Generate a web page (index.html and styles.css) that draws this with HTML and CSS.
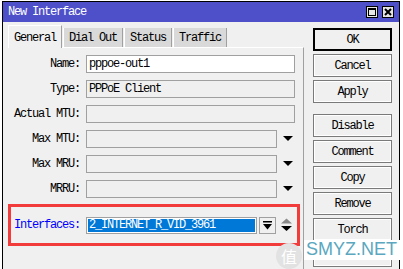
FILE: index.html
```html
<!DOCTYPE html>
<html lang="en">
<head>
    <meta charset="UTF-8">
    <title>New Interface</title>
    <link rel="stylesheet" href="styles.css">
</head>
<body>

    <div class="window">
        <div class="titlebar">
            <span class="title">New Interface</span>
            <div class="title-buttons">
                <span class="tbtn">
                    <svg width="10" height="10" viewBox="0 0 10 10"><rect x="1.5" y="1.5" width="7" height="7" fill="none" stroke="#000"/><rect x="1" y="1" width="8" height="2" fill="#000"/></svg>
                </span>
                <span class="tbtn">
                    <svg width="10" height="10" viewBox="0 0 10 10"><path d="M2 2 L8 8 M8 2 L2 8" stroke="#000" stroke-width="2"/></svg>
                </span>
            </div>
        </div>

        <div class="content">
            <!-- Pestañas y formulario -->
            <div class="main">
                <div class="tabs">
                    <div class="tab active">General</div>
                    <div class="tab">Dial Out</div>
                    <div class="tab">Status</div>
                    <div class="tab">Traffic</div>
                </div>

                <div class="panel">
                    <div class="row">
                        <label>Name:</label>
                        <div class="field editable">pppoe-out1</div>
                    </div>
                    <div class="row">
                        <label>Type:</label>
                        <div class="field">PPPoE Client</div>
                    </div>
                    <div class="row">
                        <label>Actual MTU:</label>
                        <div class="field"></div>
                    </div>
                    <div class="row">
                        <label>Max MTU:</label>
                        <div class="field short"></div>
                        <span class="drop"></span>
                    </div>
                    <div class="row">
                        <label>Max MRU:</label>
                        <div class="field short"></div>
                        <span class="drop"></span>
                    </div>
                    <div class="row">
                        <label>MRRU:</label>
                        <div class="field short"></div>
                        <span class="drop"></span>
                    </div>

                    <div class="highlight">
                        <label>Interfaces:</label>
                        <div class="select"><span>2_INTERNET_R_VID_3961</span></div>
                        <span class="select-btn">
                            <svg width="9" height="9" viewBox="0 0 9 9"><rect x="0" y="0" width="9" height="1.5" fill="#000"/><path d="M0 3 H9 L4.5 8.5 Z" fill="#000"/></svg>
                        </span>
                        <span class="updown">
                            <svg width="11" height="14" viewBox="0 0 11 14"><path d="M0 5.5 L5.5 0.5 L11 5.5 Z" fill="#8a8a8a"/><path d="M0 8 H11 L5.5 13 Z" fill="#000"/></svg>
                        </span>
                    </div>
                </div>
            </div>

            <!-- Botones -->
            <div class="actions">
                <button class="default">OK</button>
                <button>Cancel</button>
                <button>Apply</button>
                <button class="spaced">Disable</button>
                <button>Comment</button>
                <button>Copy</button>
                <button>Remove</button>
                <button>Torch</button>
                <button aria-label="PPPoE Scan"></button>
            </div>
        </div>
    </div>

    <div class="watermark">
        <span class="logo">值</span>
        <span class="mark">SMYZ.NET</span>
    </div>

</body>
</html>
```

FILE: styles.css
```css
/* Colores */
:root {
    --fondo: #f0f0f0;
    --titulo: #4d50c9;
    --borde: #a0a0a0;
    --rojo: #f23b3b;
    --seleccion: #0078d7;
}

* {
    box-sizing: border-box;
}

body {
    margin: 0;
    width: 403px;
    height: 269px;
    overflow: hidden;
    position: relative;
    background-color: #fff;
    font-family: "Liberation Mono", monospace;
    font-size: 12px;
    letter-spacing: -1.2px;
    color: #000;
}

/* Ventana */
.window {
    margin: 1px 0 0 2px;
    width: 398px;
    height: 300px;
    border: 1px solid #000;
    background-color: var(--fondo);
}

.titlebar {
    height: 20px;
    background-color: var(--titulo);
    color: #fff;
    display: flex;
    align-items: center;
    justify-content: space-between;
    padding: 0 5px 0 5px;
}

.title-buttons {
    display: flex;
    gap: 4px;
}

.tbtn {
    width: 12px;
    height: 12px;
    border: 1px solid #000;
    background-color: #e6e6e6;
    display: flex;
    align-items: center;
    justify-content: center;
}

.content {
    display: flex;
}

.main {
    padding-left: 5px;
    width: 301px;
}

/* Pestañas */
.tabs {
    display: flex;
    align-items: flex-end;
    height: 24px;
    margin-top: 1px;
}

.tab {
    height: 19px;
    padding: 3px 5px 0 5px;
    background-color: #d9d9d9;
    border-left: 1px solid #fff;
    border-right: 1px solid #a0a0a0;
    margin-right: 1px;
}

.tab.active {
    height: 23px;
    padding-top: 5px;
    background-color: var(--fondo);
    border-top: 1px solid #fff;
    position: relative;
    top: 1px;
}

/* Formulario */
.panel {
    height: 240px;
    border-top: 1px solid #fff;
    border-right: 1px solid #a0a0a0;
    padding-top: 7px;
}

.row {
    display: flex;
    align-items: center;
    height: 18px;
    margin-bottom: 7px;
}

.row label {
    width: 72px;
    text-align: right;
    margin-right: 6px;
}

.field {
    width: 209px;
    height: 18px;
    border: 1px solid var(--borde);
    padding: 1px 2px;
    line-height: 14px;
}

.field.editable {
    background-color: #fff;
}

.field.short {
    width: 191px;
}

.drop {
    margin-left: 6px;
    margin-bottom: 2px;
    width: 0;
    height: 0;
    border-left: 5px solid transparent;
    border-right: 5px solid transparent;
    border-top: 5px solid #000;
}

/* Interfaces */
.highlight {
    width: 292px;
    height: 42px;
    margin-top: -1px;
    border: 3px solid var(--rojo);
    display: flex;
    align-items: center;
}

.highlight label {
    width: 69px;
    text-align: right;
    margin-right: 6px;
    color: #0000ff;
}

.select {
    width: 171px;
    height: 17px;
    border: 1px solid var(--borde);
    background-color: #fff;
    padding: 1px;
}

.select span {
    display: block;
    height: 13px;
    line-height: 13px;
    padding-left: 1px;
    background-color: var(--seleccion);
    color: #fff;
}

.select-btn {
    width: 17px;
    height: 17px;
    margin-left: 2px;
    border: 1px solid var(--borde);
    display: flex;
    align-items: center;
    justify-content: center;
}

.updown {
    margin-left: 5px;
    display: flex;
}

/* Botones */
.actions {
    display: flex;
    flex-direction: column;
    gap: 3px;
    margin-left: 9px;
    padding-top: 6px;
}

.actions button {
    width: 79px;
    height: 23px;
    font-family: inherit;
    font-size: 12px;
    letter-spacing: -1.2px;
    color: #000;
    background-color: var(--fondo);
    border: 1px solid #7a7a7a;
    box-shadow: inset 0 0 0 1px #fff;
    padding: 0;
}

.actions button.default {
    border: 2px solid #000;
    box-shadow: none;
}

.actions button.spaced {
    margin-top: 8px;
}

/* Marca de agua */
.watermark {
    position: absolute;
    left: 276px;
    top: 240px;
    display: flex;
    align-items: flex-start;
}

.logo {
    width: 26px;
    height: 26px;
    margin-top: 3px;
    border-radius: 50%;
    background-color: #e2e2e2;
    color: #fff;
    font-family: "Noto Sans CJK SC", sans-serif;
    font-size: 16px;
    letter-spacing: 0;
    display: flex;
    align-items: center;
    justify-content: center;
}

.mark {
    margin-left: 2px;
    padding: 0 4px 2px 2px;
    background-color: #fff;
    color: #5aa7bf;
    font-family: "Liberation Sans", sans-serif;
    font-size: 18px;
    letter-spacing: 0;
    line-height: 18px;
}
```
